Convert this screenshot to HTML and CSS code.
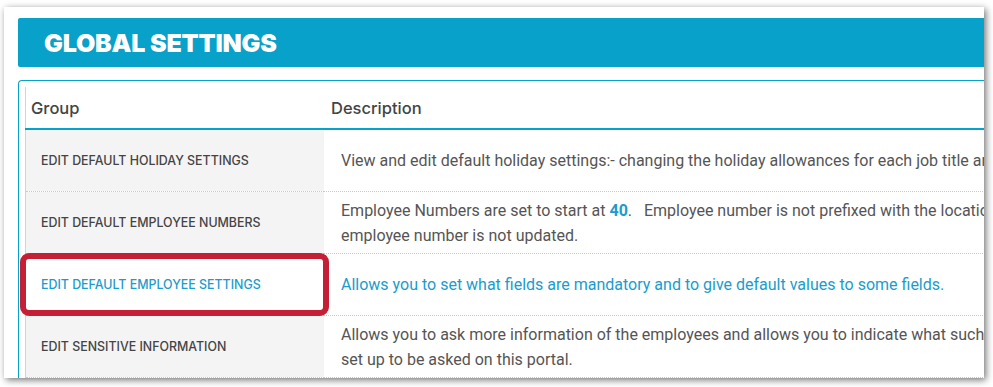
FILE: index.html
```html
<!DOCTYPE html>
<html>
<head>
<meta charset="utf-8">
<link rel="stylesheet" href="styles.css">
</head>
<body>
<div class="frame">
  <div class="page">
    <div class="title-bar"><h1>GLOBAL SETTINGS</h1></div>
    <div class="table-box">
      <table class="settings">
        <thead>
          <tr><th class="col-group">Group</th><th class="col-desc">Description</th></tr>
        </thead>
        <tbody>
          <tr>
            <td class="group">EDIT DEFAULT HOLIDAY SETTINGS</td>
            <td class="desc">View and edit default holiday settings:- changing the holiday allowances for each job title and location can be done here.</td>
          </tr>
          <tr>
            <td class="group">EDIT DEFAULT EMPLOYEE NUMBERS</td>
            <td class="desc">Employee Numbers are set to start at <b class="num">40</b>.&nbsp;&nbsp; Employee number is not prefixed with the location code. When an employee moves location the<br>employee number is not updated.</td>
          </tr>
          <tr class="active">
            <td class="group"><span class="highlight"></span>EDIT DEFAULT EMPLOYEE SETTINGS</td>
            <td class="desc">Allows you to set what fields are mandatory and to give default values to some fields.</td>
          </tr>
          <tr>
            <td class="group">EDIT SENSITIVE INFORMATION</td>
            <td class="desc">Allows you to ask more information of the employees and allows you to indicate what such information is<br>set up to be asked on this portal.</td>
          </tr>
        </tbody>
      </table>
    </div>
  </div>
</div>
</body>
</html>
```
FILE: styles.css
```css
html, body {
  margin: 0;
  padding: 0;
  background: #ffffff;
}
body {
  width: 993px;
  height: 387px;
  overflow: hidden;
}
.frame {
  margin: 7px 0 0 4px;
  width: 980px;
  height: 371px;
  background: #ffffff;
  box-shadow: 2px 2px 7px rgba(0, 0, 0, 0.55);
  overflow: hidden;
  position: relative;
}
.page {
  padding: 11px 0 0 14px;
  width: 1400px;
}
.title-bar {
  height: 49px;
  background: #08a1c9;
  border-radius: 2px 0 0 2px;
  display: flex;
  align-items: center;
  padding-left: 26px;
}
.title-bar h1 {
  margin: 0;
  font-family: "Inter", sans-serif;
  font-weight: 900;
  font-size: 25px;
  letter-spacing: -0.2px;
  color: #ffffff;
}
.table-box {
  margin-top: 13px;
  border-top: 1px solid #08a1c9;
  border-left: 1px solid #08a1c9;
  border-top-left-radius: 4px;
  padding: 6px 0 0 6px;
}
.settings {
  border-collapse: collapse;
  width: 1350px;
  border-left: 1px solid #d4d4d4;
}
.settings th {
  height: 41px;
  text-align: left;
  font-family: "Inter", sans-serif;
  font-weight: 500;
  font-size: 16.5px;
  color: #444444;
  border-bottom: 2px solid #08a1c9;
  padding: 0;
  vertical-align: middle;
}
.settings thead tr {
  border-left: 1px dotted #5a8fa6;
}
.col-group {
  width: 293px;
  padding-left: 5px !important;
}
.col-desc {
  padding-left: 7px !important;
}
.settings td {
  border-bottom: 1px dotted #c8c8c8;
  padding: 0;
  height: 61px;
  vertical-align: middle;
}
.group {
  background: #f4f4f4;
  padding-left: 15px !important;
  font-family: "Inter", sans-serif;
  font-weight: 500;
  font-size: 12.4px;
  color: #444444;
  position: relative;
}
.desc {
  padding-left: 17px !important;
  font-family: "Roboto", sans-serif;
  font-size: 16px;
  line-height: 25px;
  color: #555555;
  white-space: nowrap;
}
.num {
  color: #1b9cca;
  font-weight: 700;
}
.active .group {
  background: #ffffff;
  color: #1a9ccc;
}
.active .desc {
  color: #1a9ccc;
}
.highlight {
  position: absolute;
  left: -6px;
  top: -1px;
  width: 309px;
  height: 63px;
  box-sizing: border-box;
  border: 6px solid #c41f35;
  border-radius: 9px;
}
```
